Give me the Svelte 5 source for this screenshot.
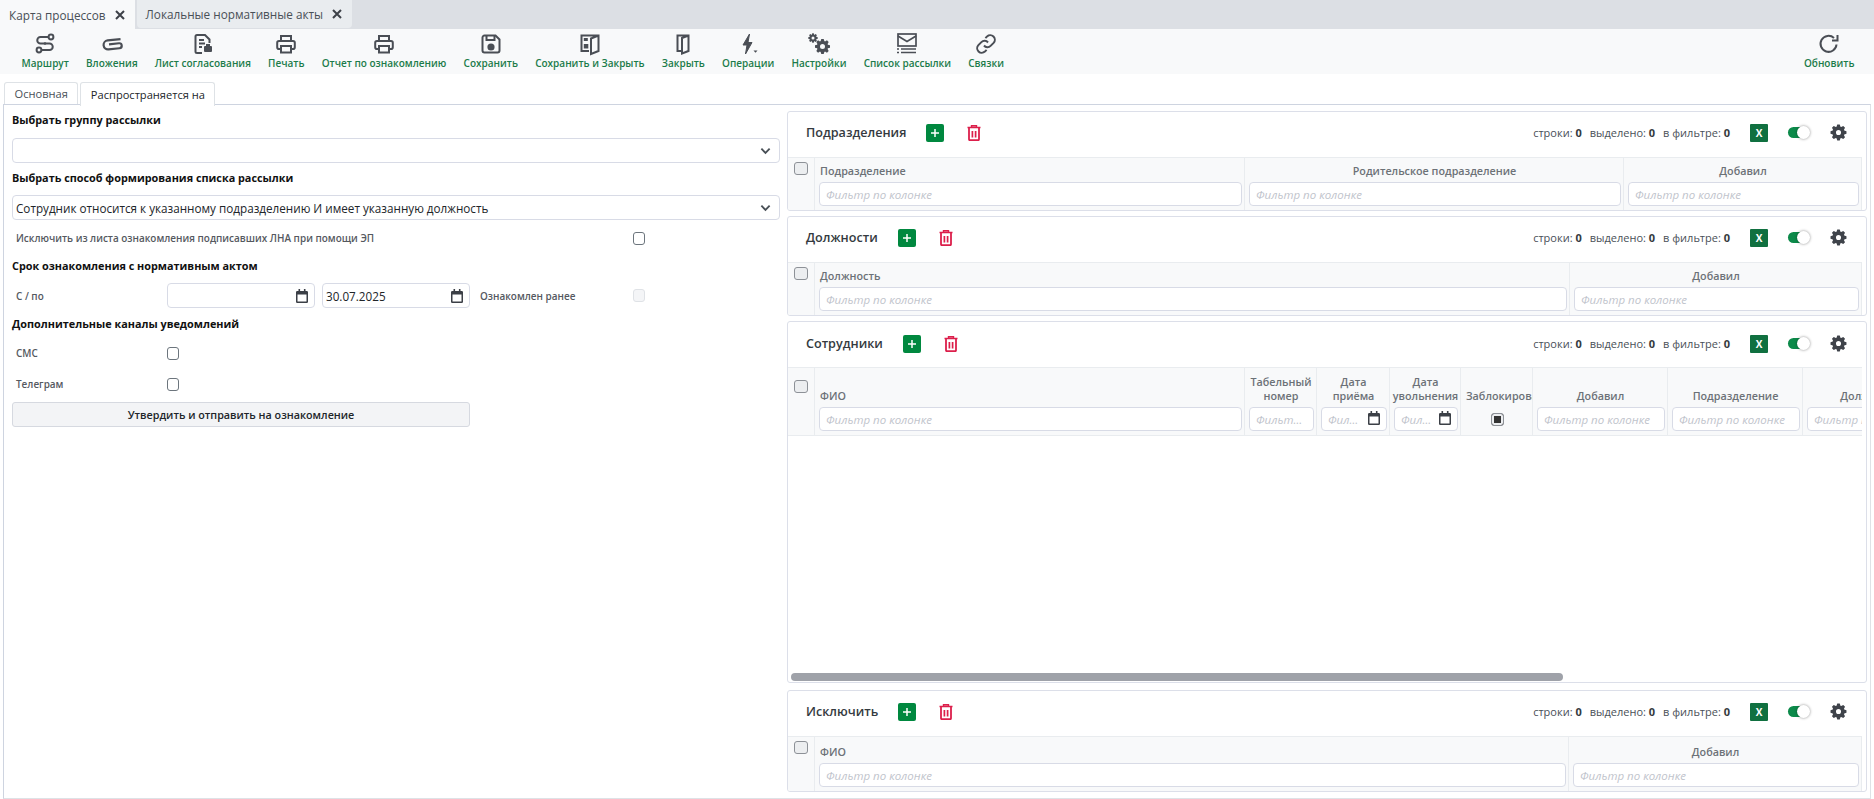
<script>
	function gearPath(cx, cy, outer, inner, hole, teeth) {
		let d = '';
		const step = (Math.PI * 2) / teeth;
		for (let i = 0; i < teeth; i++) {
			const a = i * step - Math.PI / 2;
			const pts = [
				[inner, a - step * 0.42],
				[outer, a - step * 0.2],
				[outer, a + step * 0.2],
				[inner, a + step * 0.42]
			];
			pts.forEach(([r, t], j) => {
				d += `${i === 0 && j === 0 ? 'M' : 'L'}${(cx + r * Math.cos(t)).toFixed(2)} ${(cy + r * Math.sin(t)).toFixed(2)}`;
			});
		}
		d += `Z M${cx + hole} ${cy}a${hole} ${hole} 0 1 0 ${-hole * 2} 0a${hole} ${hole} 0 1 0 ${hole * 2} 0Z`;
		return d;
	}

	const icons = {
		route: `<path d="M15 5H7.500a3.200 3.200 0 0 0 0 6.500h9a3.200 3.200 0 0 1 0 6.500H9"/><circle cx="18" cy="5" r="2.400"/><circle cx="6" cy="18" r="2.400"/><circle cx="12" cy="11.500" r="1.300" fill="currentColor" stroke="none"/>`,
		clip: `<g transform="rotate(-6 12 12)"><path d="M21 8H8a4.500 4.500 0 0 0 0 9h11a2.500 2.500 0 0 0 0-5H9" stroke-width="2.200"/></g>`,
		sheet: `<path d="M11 21H6a1.500 1.500 0 0 1-1.500-1.500v-15A1.500 1.500 0 0 1 6 3h8l4.500 4.500V11"/><path d="M8 8h5M8 11.500h6M8 15h3"/><rect x="13" y="14" width="8" height="6" rx="1" fill="currentColor" stroke="none"/><rect x="15" y="12" width="4" height="2.400" fill="currentColor" stroke="none"/>`,
		print: `<path d="M7 9V4h10v5"/><path d="M7 17H5a1.800 1.800 0 0 1-1.800-1.800v-4.400A1.800 1.800 0 0 1 5 9h14a1.800 1.800 0 0 1 1.800 1.800v4.400A1.800 1.800 0 0 1 19 17h-2"/><path d="M7 14h10v6.500H7z"/>`,
		save: `<path d="M5.500 3.500h11l4 4v11a2 2 0 0 1-2 2h-13a2 2 0 0 1-2-2v-13a2 2 0 0 1 2-2z"/><path d="M7.500 4v4h8V4"/><circle cx="12" cy="15" r="2.600" fill="currentColor"/>`,
		saveclose: `<path d="M11 19H3.500V3.500h17v15.500l-7.500 3V6.500l7.500-3"/><rect x="5.800" y="6" width="4" height="3" fill="currentColor" stroke="none"/><rect x="5.800" y="12" width="4.500" height="4.500" fill="currentColor" stroke="none"/>`,
		door: `<path d="M11 19H6.500V3.500h11v15.500l-6.500 2.500V6l6.500-2.500"/>`,
		bolt: `<path d="M13.500 2 7 13h4l-1.500 9L16 10.500h-4z" fill="currentColor" stroke-width="1"/><path d="M17.500 18.500h4l-2 2.200z" fill="currentColor" stroke="none"/>`,
		gears: `<path fill="currentColor" stroke="none" fill-rule="evenodd" d="${gearPath(15.5, 14.5, 7.6, 5.7, 2.5, 8)}"/><path fill="currentColor" stroke="none" fill-rule="evenodd" d="${gearPath(6, 6, 4.8, 3.5, 1.5, 8)}"/>`,
		mail: `<rect x="3" y="2" width="18" height="12" stroke-width="1.700"/><path d="M3 4l9 5.500L21 4" stroke-width="1.700"/><path d="M6 17h15M6 20.500h15" stroke-width="1.600"/><path d="M2 17h2M2 20.500h2" stroke-width="1.600"/>`,
		link: `<path d="M10 13.500a4.500 4.500 0 0 0 6.600.4l3-3a4.600 4.600 0 0 0-6.500-6.500l-1.700 1.700"/><path d="M14 10.500a4.500 4.500 0 0 0-6.600-.4l-3 3a4.600 4.600 0 0 0 6.500 6.500l1.700-1.700"/>`,
		refresh: `<path d="M19.500 12.500A8 8 0 1 1 17 6"/><path d="M20.500 3v5.500H15" />`
	};

	const tools = [
		{ label: 'Маршрут', icon: 'route' },
		{ label: 'Вложения', icon: 'clip' },
		{ label: 'Лист согласования', icon: 'sheet' },
		{ label: 'Печать', icon: 'print' },
		{ label: 'Отчет по ознакомлению', icon: 'print' },
		{ label: 'Сохранить', icon: 'save' },
		{ label: 'Сохранить и Закрыть', icon: 'saveclose' },
		{ label: 'Закрыть', icon: 'door' },
		{ label: 'Операции', icon: 'bolt' },
		{ label: 'Настройки', icon: 'gears' },
		{ label: 'Список рассылки', icon: 'mail' },
		{ label: 'Связки', icon: 'link' }
	];

	const cogPath = gearPath(12, 12, 11.4, 8.6, 3.6, 8);

	const panels = [
		{
			title: 'Подразделения',
			cols: [
				{ label: 'Подразделение', flex: true, left: true },
				{ label: 'Родительское подразделение', width: 379 },
				{ label: 'Добавил', width: 238 }
			]
		},
		{
			title: 'Должности',
			cols: [
				{ label: 'Должность', flex: true, left: true },
				{ label: 'Добавил', width: 292 }
			]
		},
		{
			title: 'Сотрудники',
			tall: true,
			cols: [
				{ label: 'ФИО', width: 430, left: true },
				{ label: 'Табельный номер', width: 72 },
				{ label: 'Дата\nприёма', width: 73, date: true },
				{ label: 'Дата\nувольнения', width: 71, date: true },
				{ label: 'Заблокировано', width: 72, flag: true },
				{ label: 'Добавил', width: 135 },
				{ label: 'Подразделение', width: 135 },
				{ label: 'Должность', width: 135 }
			]
		},
		{
			title: 'Исключить',
			last: true,
			cols: [
				{ label: 'ФИО', flex: true, left: true },
				{ label: 'Добавил', width: 293 }
			]
		}
	];
</script>

{#snippet calendar()}
	<svg class="cal" viewBox="0 0 12 14" aria-hidden="true">
		<path fill="currentColor" d="M2.500 0h1.600v2h3.800V0h1.600v2h1.200A1.300 1.300 0 0 1 12 3.300V12.700A1.300 1.300 0 0 1 10.700 14H1.300A1.300 1.300 0 0 1 0 12.700V3.300A1.300 1.300 0 0 1 1.300 2h1.200zM1.500 5.500v7h9v-7z" />
	</svg>
{/snippet}

{#snippet chevron()}
	<svg class="chev" viewBox="0 0 12 8" aria-hidden="true">
		<path d="M1.500 1.500 6 6l4.500-4.500" fill="none" stroke="currentColor" stroke-width="2" />
	</svg>
{/snippet}

{#snippet close()}
	<svg class="close" viewBox="0 0 10 10" aria-hidden="true">
		<path d="M1 1l8 8M9 1l-8 8" stroke="currentColor" stroke-width="2" />
	</svg>
{/snippet}

<div class="page">
	<nav class="doc-tabs">
		<div class="doc-tab active">Карта процессов {@render close()}</div>
		<div class="doc-tab">Локальные нормативные акты {@render close()}</div>
	</nav>

	<div class="toolbar">
		{#each tools as t}
			<button class="tool">
				<svg viewBox="0 0 24 24" aria-hidden="true">{@html icons[t.icon]}</svg>
				<span>{t.label}</span>
			</button>
		{/each}
		<button class="tool refresh">
			<svg viewBox="0 0 24 24" aria-hidden="true">{@html icons.refresh}</svg>
			<span>Обновить</span>
		</button>
	</div>

	<div class="sub-tabs">
		<div class="sub-tab">Основная</div>
		<div class="sub-tab active">Распространяется на</div>
	</div>

	<main class="content">
		<section class="form">
			<h4 class="h-first">Выбрать группу рассылки</h4>
			<div class="select">{@render chevron()}</div>
			<h4>Выбрать способ формирования списка рассылки</h4>
			<div class="select">
				<span>Сотрудник относится к указанному подразделению И имеет указанную должность</span>
				{@render chevron()}
			</div>

			<div class="row exclude">
				<label class="wide" for="ex">Исключить из листа ознакомления подписавших ЛНА при помощи ЭП</label>
				<input id="ex" type="checkbox" class="check" />
			</div>

			<h4 class="h-term">Срок ознакомления с нормативным актом</h4>
			<div class="row">
				<label for="from">С / по</label>
				<div class="date" id="from">{@render calendar()}</div>
				<div class="date second"><span>30.07.2025</span>{@render calendar()}</div>
				<label class="earlier" for="early">Ознакомлен ранее</label>
				<input id="early" type="checkbox" class="check" disabled />
			</div>

			<h4 class="h-extra">Дополнительные каналы уведомлений</h4>
			<div class="row sms">
				<label for="sms">СМС</label>
				<input id="sms" type="checkbox" class="check" />
			</div>
			<div class="row tg">
				<label for="tg">Телеграм</label>
				<input id="tg" type="checkbox" class="check" />
			</div>
			<button class="submit">Утвердить и отправить на ознакомление</button>
		</section>

		<section class="grids">
			{#each panels as p}
				<article class="panel" class:grow={p.tall} class:last={p.last}>
					<header class="panel-head">
						<h3>{p.title}</h3>
						<button class="add" aria-label="Добавить">
							<svg viewBox="0 0 10 10"><path d="M5 1v8M1 5h8" stroke="#fff" stroke-width="1.500" /></svg>
						</button>
						<button class="trash" aria-label="Удалить">
							<svg viewBox="0 0 14 16">
								<path d="M.5 2.500h13M4.500 2V.8h5V2" fill="none" stroke="currentColor" stroke-width="1.400" />
								<path d="M2 3v11.200a1 1 0 0 0 1 1h8a1 1 0 0 0 1-1V3" fill="none" stroke="currentColor" stroke-width="1.800" />
								<path d="M5.400 6v6.500M8.600 6v6.500" fill="none" stroke="currentColor" stroke-width="1.700" />
							</svg>
						</button>
						<div class="stats">
							<span>строки: <b>0</b></span>
							<span>выделено: <b>0</b></span>
							<span>в фильтре: <b>0</b></span>
						</div>
						<button class="xls">X</button>
						<span class="toggle"><i></i></span>
						<svg class="cog" viewBox="0 0 24 24" aria-hidden="true"><path fill-rule="evenodd" fill="currentColor" d={cogPath} /></svg>
					</header>

					<div class="thead" class:tall={p.tall}>
						<div class="cell check-cell"><span class="box"></span></div>
						{#each p.cols as c}
							<div class="cell" class:fill={c.flex} style={c.width ? `width:${c.width}px` : ''}>
								<div class="title" class:left={c.left} class:clip={c.flag}>{c.label}</div>
								{#if c.flag}
									<div class="flag"><span class="tri"></span></div>
								{:else}
									<div class="filter">
										<input placeholder="Фильтр по колонке" class:has-date={c.date} />
										{#if c.date}{@render calendar()}{/if}
									</div>
								{/if}
							</div>
						{/each}
					</div>

					{#if p.tall}
						<div class="tbody"><div class="scroll-thumb"></div></div>
					{/if}
				</article>
			{/each}
		</section>
	</main>
</div>

<style>
	:global(body) {
		margin: 0;
		background: #fff;
		font-family: 'Open Sans', sans-serif;
		color: #212529;
	}

	.page {
		display: flex;
		flex-direction: column;
		height: 799px;
		overflow: hidden;
	}

	/* document tabs */
	.doc-tabs {
		display: flex;
		gap: 2px;
		height: 29px;
		background: #dcdfe4;
	}
	.doc-tab {
		display: flex;
		align-items: center;
		gap: 9px;
		padding: 0 10px 0 9px;
		font-size: 11.750px;
		color: #495057;
		background: #e9ecef;
		border-radius: 0 0 4px 4px;
		height: 28px;
	}
	.doc-tab.active {
		background: #f8f9fa;
		height: 29px;
		border-radius: 0;
	}
	.close {
		width: 10px;
		height: 10px;
		color: #3d4148;
	}

	/* toolbar */
	.toolbar {
		display: flex;
		height: 45px;
		padding-left: 13px;
		padding-right: 11px;
		background: #f8f9fa;
	}
	.tool {
		display: flex;
		flex-direction: column;
		align-items: center;
		padding: 3px 8.600px 0;
		border: 0;
		background: none;
		font-family: inherit;
		font-size: 10px;
		font-weight: 600;
		color: #1c7c4a;
		white-space: nowrap;
	}
	.tool svg {
		width: 24px;
		height: 24px;
		fill: none;
		stroke: #4a4e55;
		color: #4a4e55;
		stroke-width: 2;
	}
	.refresh {
		margin-left: auto;
	}

	/* sub tabs */
	.sub-tabs {
		display: flex;
		gap: 2px;
		height: 22px;
		margin-top: 8px;
		padding-left: 4px;
	}
	.sub-tab {
		display: flex;
		align-items: center;
		padding: 0 9.500px;
		font-size: 11.100px;
		color: #495057;
		background: #fff;
		border: 1px solid #dee2e6;
		border-bottom: 0;
		border-radius: 3px 3px 0 0;
	}
	.sub-tab.active {
		color: #212529;
		position: relative;
		z-index: 1;
		height: 23px;
	}

	.content {
		flex: 1;
		display: flex;
		min-height: 0;
		margin: 0 3px;
		padding-bottom: 6px;
		border: 1px solid #ced4e0;
		border-bottom-color: #dee2e6;
		border-right-color: #dee2e6;
		box-sizing: border-box;
		height: 695px;
	}

	/* left form */
	.form {
		width: 783px;
		box-sizing: border-box;
		padding: 0 7px 0 8px;
		flex: none;
	}
	h4 {
		margin: 6px 0 8px;
		height: 18px;
		line-height: 18px;
		font-size: 10.850px;
		font-weight: 700;
		color: #111;
	}
	.h-first {
		margin-bottom: 9px;
	}
	.h-term {
		margin-top: 10px;
	}
	.h-extra {
		margin-top: 7px;
	}
	.select {
		display: flex;
		align-items: center;
		justify-content: flex-end;
		height: 25px;
		box-sizing: border-box;
		padding: 0 8px 0 3px;
		border: 1px solid #d8dbe6;
		border-radius: 4px;
		font-size: 11.700px;
		color: #212529;
	}
	.select span {
		flex: 1;
	}
	.chev {
		width: 11px;
		height: 8px;
		color: #495057;
	}
	.row {
		display: grid;
		grid-template-columns: 155px 148px 155px 163px auto;
		align-items: center;
	}
	.row label {
		padding-left: 4px;
		font-size: 9.950px;
		font-weight: 600;
		color: #55595f;
	}
	.row .wide {
		grid-column: 1 / 5;
	}
	.exclude {
		height: 18px;
		margin-top: 9px;
	}
	.sms {
		height: 18px;
		margin-top: 11px;
	}
	.tg {
		height: 18px;
		margin-top: 13px;
	}
	.check {
		appearance: none;
		margin: 0;
		width: 12px;
		height: 13px;
		border: 1px solid #6c757d;
		border-radius: 3px;
		background: #fff;
	}
	.check:disabled {
		background: #f4f5f7;
		border-color: #dfe2e6;
	}
	.date {
		display: flex;
		align-items: center;
		justify-content: flex-end;
		box-sizing: border-box;
		width: 148px;
		height: 25px;
		padding: 0 6px 0 3px;
		border: 1px solid #d8dbe6;
		border-radius: 4px;
		font-size: 11.700px;
		color: #212529;
	}
	.date span {
		flex: 1;
	}
	.date.second {
		margin-left: 7px;
	}
	.row .earlier {
		padding-left: 10px;
	}
	.cal {
		width: 12px;
		height: 14px;
		color: #3b3f46;
		flex: none;
	}
	.submit {
		display: block;
		width: 458px;
		height: 25px;
		margin-top: 9px;
		border: 1px solid #d6d9e0;
		border-radius: 3px;
		background: #f3f4f6;
		font-family: inherit;
		font-size: 10.750px;
		font-weight: 600;
		color: #212529;
	}

	/* right column */
	.grids {
		display: flex;
		flex-direction: column;
		gap: 5px;
		width: 1080px;
		flex: none;
		padding-top: 6px;
		min-height: 0;
	}
	.panel {
		display: flex;
		flex-direction: column;
		box-sizing: border-box;
		border: 1px solid #dcdfe9;
		border-radius: 3px;
		overflow: hidden;
		background: #fff;
	}
	.panel.grow {
		flex: 1;
		min-height: 0;
	}
	.panel.last {
		margin-top: 2px;
	}
	.panel-head {
		display: flex;
		align-items: center;
		box-sizing: border-box;
		height: 45px;
		flex: none;
		padding: 0 19px 4px 18px;
	}
	.grow .panel-head {
		padding-bottom: 2px;
	}
	h3 {
		margin: 0 20px 0 0;
		font-size: 12.600px;
		font-weight: 600;
		color: #343a40;
	}
	.add {
		display: flex;
		align-items: center;
		justify-content: center;
		width: 18px;
		height: 18px;
		padding: 0;
		border: 0;
		border-radius: 2px;
		background: #00883f;
	}
	.add svg {
		width: 10px;
		height: 10px;
	}
	.trash {
		width: 15px;
		height: 17px;
		margin-left: 23px;
		padding: 0;
		border: 0;
		background: none;
		color: #dc1f4b;
	}
	.trash svg {
		display: block;
		width: 14px;
		height: 16px;
	}
	.stats {
		display: flex;
		gap: 8px;
		margin-left: auto;
		font-size: 11px;
		color: #495057;
	}
	.stats b {
		color: #343a40;
	}
	.xls {
		width: 18px;
		height: 18px;
		margin-left: 20px;
		padding: 0;
		border: 0;
		border-radius: 1px;
		background: #107040;
		font-family: inherit;
		font-size: 10px;
		font-weight: 700;
		color: #fff;
	}
	.toggle {
		position: relative;
		width: 21px;
		height: 11px;
		margin-left: 20px;
		border-radius: 6px;
		background: #0c8a4a;
	}
	.toggle i {
		position: absolute;
		right: -1px;
		top: -1px;
		width: 13px;
		height: 13px;
		border-radius: 50%;
		background: #fff;
		box-shadow: 0 0 3px rgba(0, 0, 0, 0.45);
	}
	.cog {
		width: 17px;
		height: 17px;
		margin-left: 21px;
		color: #3f434a;
	}

	/* table header */
	.thead {
		display: flex;
		height: 52px;
		flex: none;
		margin-right: 4px;
		overflow: hidden;
		background: #f8f9fa;
		border-top: 1px solid #e9ecef;
	}
	.last .thead {
		height: 54px;
	}
	.thead.tall {
		height: 67px;
		border-bottom: 1px solid #e9ecef;
	}
	.cell {
		display: flex;
		flex-direction: column;
		justify-content: flex-end;
		flex: none;
		box-sizing: border-box;
		padding: 0 2px 4px 4px;
		border-right: 1px solid #e9ecef;
	}
	.cell.fill {
		flex: 1;
		min-width: 0;
	}
	.check-cell {
		justify-content: flex-start;
		width: 27px;
		padding: 4px 0 0 6px;
	}
	.tall .check-cell {
		padding-top: 12px;
	}
	.box {
		width: 14px;
		height: 13px;
		box-sizing: border-box;
		border: 1px solid #8d9197;
		border-radius: 3px;
		background: #eceef0;
	}
	.title {
		margin: 0 -2px 4px -3px;
		font-size: 10.750px;
		line-height: 14px;
		font-weight: 600;
		text-align: center;
		color: #6c7177;
		white-space: pre-line;
		overflow: hidden;
	}
	.title.left {
		text-align: left;
		padding-left: 4px;
	}
	.title.clip {
		white-space: nowrap;
		padding-left: 4px;
		text-align: left;
	}
	.filter {
		position: relative;
		height: 24px;
	}
	.filter input {
		display: block;
		width: 100%;
		height: 100%;
		box-sizing: border-box;
		padding: 0 6px;
		border: 1px solid #d8dbe6;
		border-radius: 4px;
		background: #fff;
		font-family: inherit;
		font-size: 11.500px;
		font-style: italic;
		outline: none;
	}
	.filter input::placeholder {
		color: #bfc4cc;
		opacity: 1;
	}
	.filter input:placeholder-shown {
		text-overflow: ellipsis;
	}
	.filter input.has-date {
		padding-right: 22px;
	}
	.filter .cal {
		position: absolute;
		top: 4px;
		right: 7px;
	}
	.flag {
		display: flex;
		align-items: center;
		justify-content: center;
		height: 24px;
	}
	.tri {
		width: 13px;
		height: 13px;
		box-sizing: border-box;
		border: 1px solid #8d9197;
		border-radius: 3px;
		background: #333;
		box-shadow: inset 0 0 0 2px #eceef0;
	}

	/* table body */
	.tbody {
		flex: 1;
		display: flex;
		align-items: flex-end;
		padding: 0 0 1px 3px;
		min-height: 0;
	}
	.scroll-thumb {
		width: 772px;
		height: 8px;
		border-radius: 4px;
		background: #9fa2a9;
	}
</style>
